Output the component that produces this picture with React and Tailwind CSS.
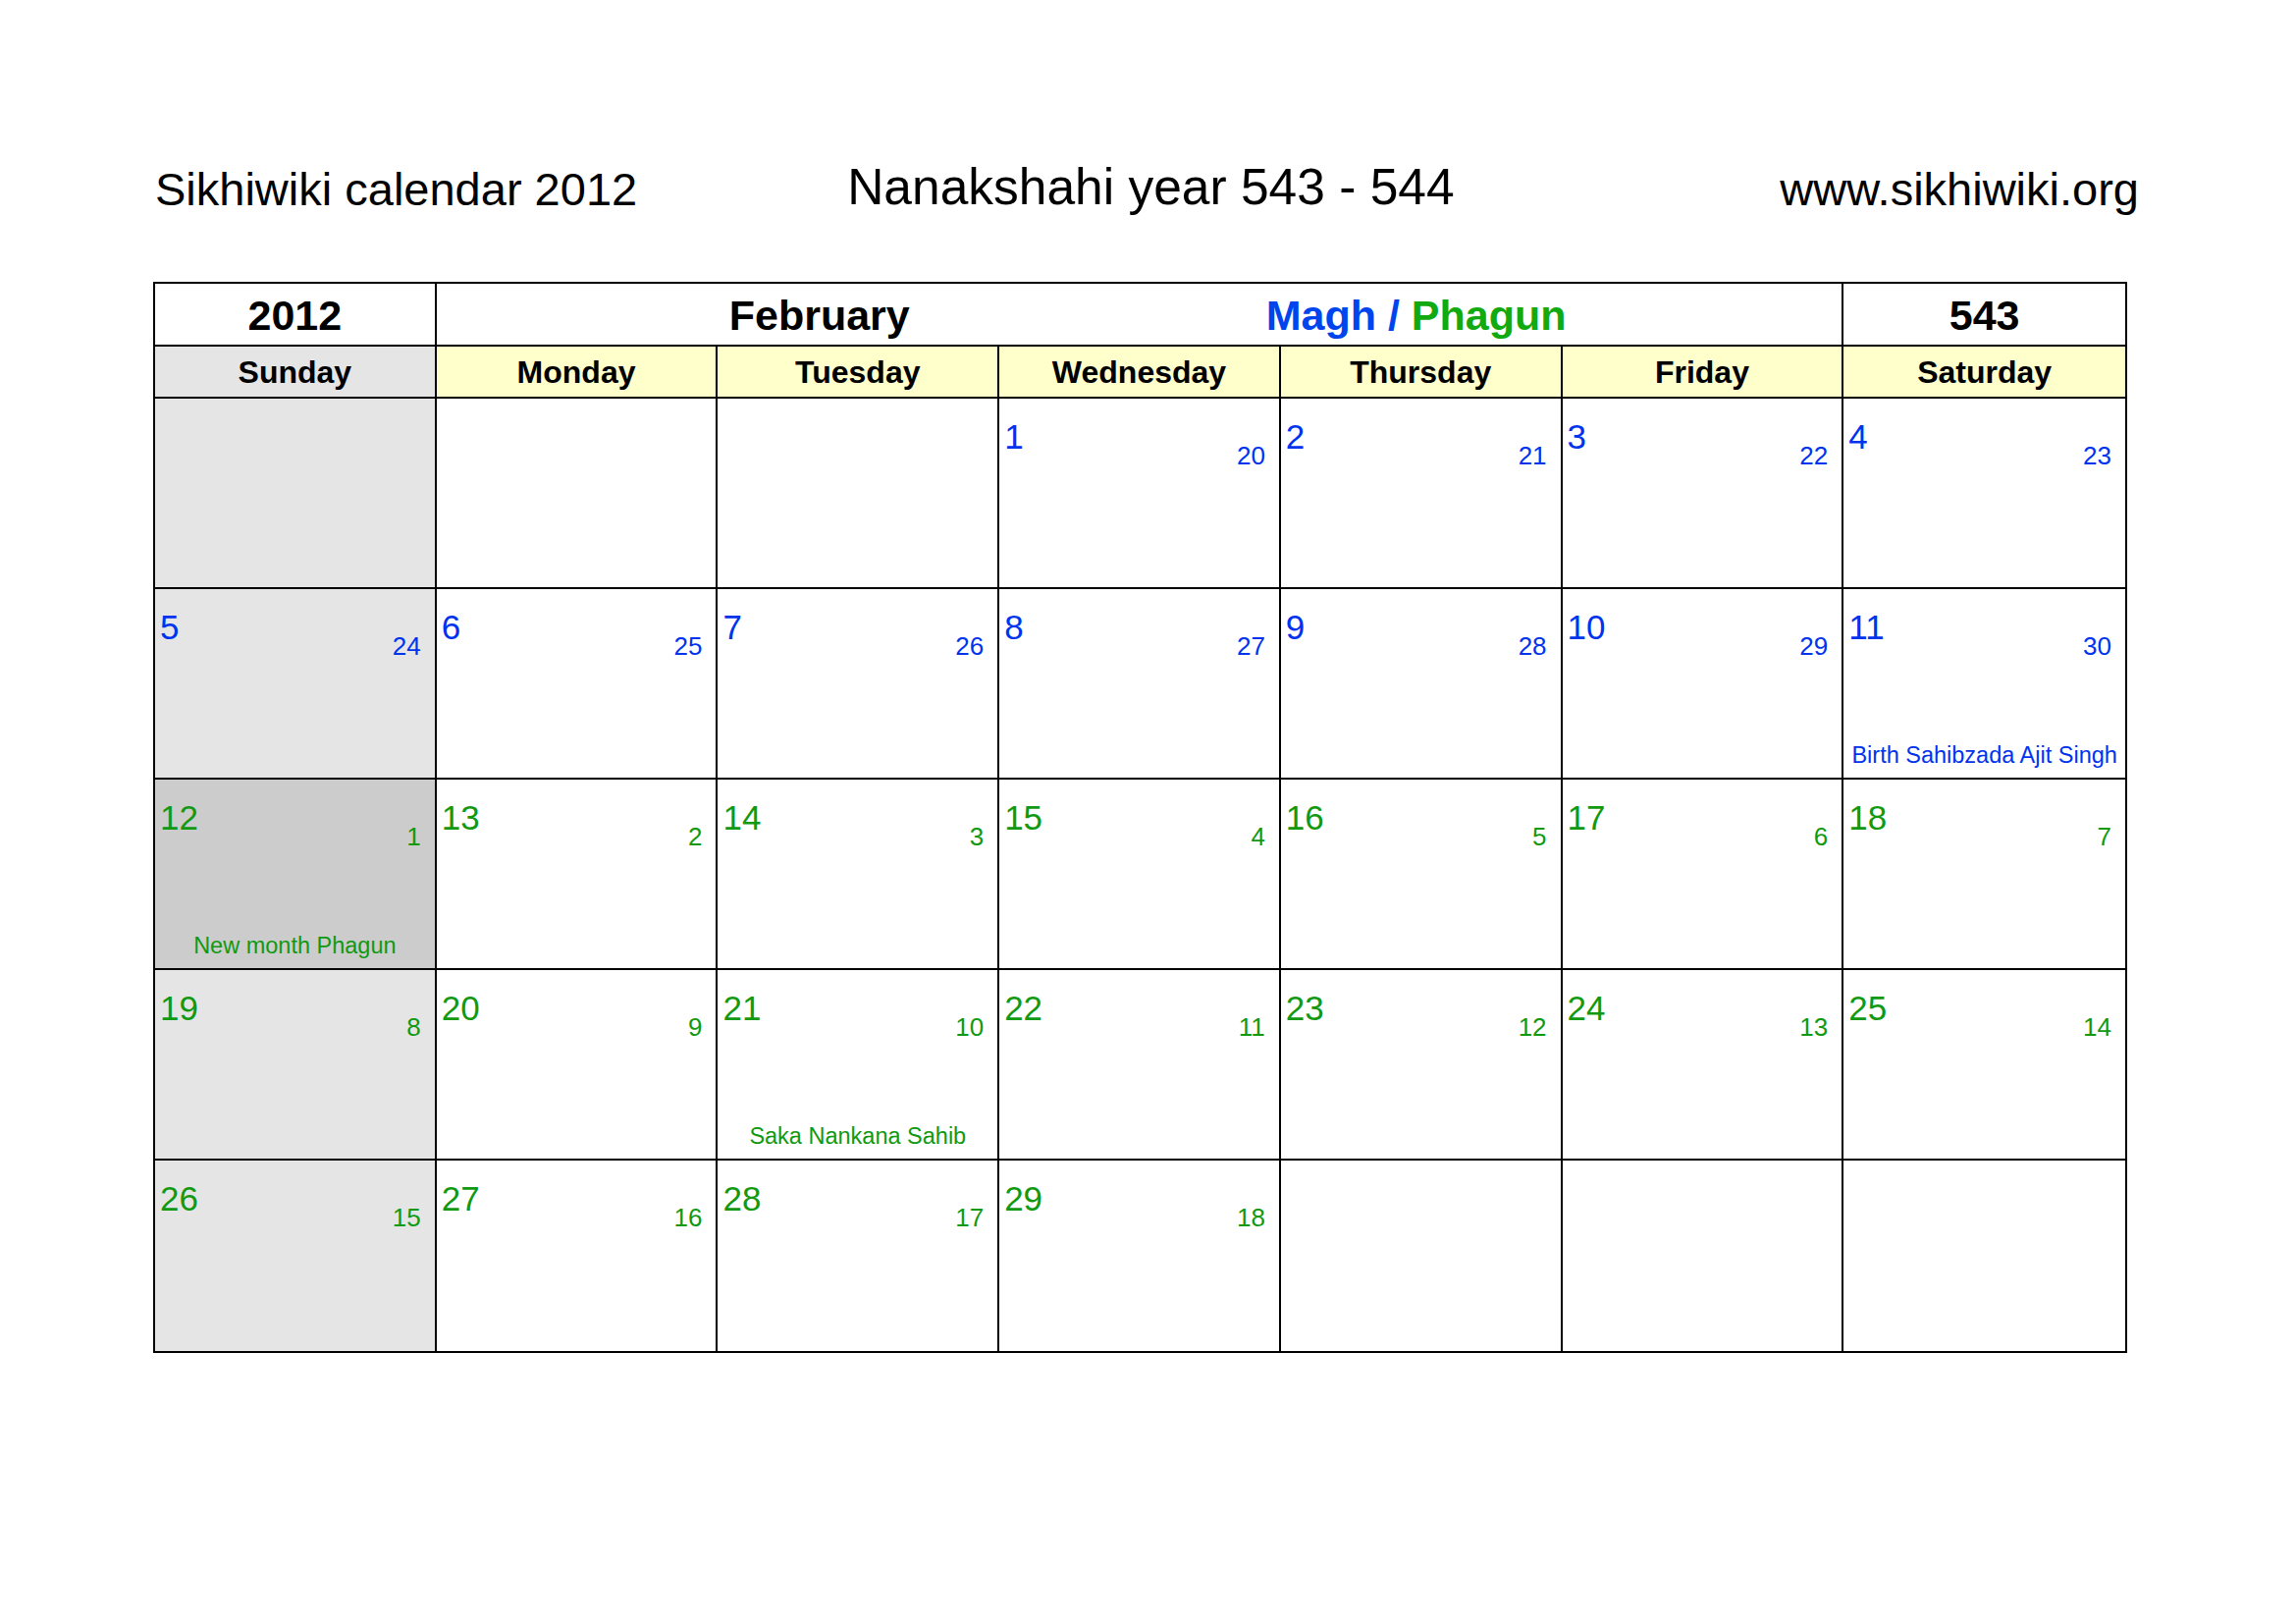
const B = "text-[#0033ee]";
const G = "text-[#119911]";
const rows = [
  [null, null, null, [1, 20, B], [2, 21, B], [3, 22, B], [4, 23, B]],
  [[5, 24, B], [6, 25, B], [7, 26, B], [8, 27, B], [9, 28, B], [10, 29, B], [11, 30, B, "Birth Sahibzada Ajit Singh"]],
  [[12, 1, G, "New month Phagun"], [13, 2, G], [14, 3, G], [15, 4, G], [16, 5, G], [17, 6, G], [18, 7, G]],
  [[19, 8, G], [20, 9, G], [21, 10, G, "Saka Nankana Sahib"], [22, 11, G], [23, 12, G], [24, 13, G], [25, 14, G]],
  [[26, 15, G], [27, 16, G], [28, 17, G], [29, 18, G], null, null, null],
];
const days = ["Sunday", "Monday", "Tuesday", "Wednesday", "Thursday", "Friday", "Saturday"];

export default function App() {
  return (
    <div className="w-[2339px] h-[1653px] bg-white text-black" style={{ fontFamily: '"Liberation Sans", Arial, sans-serif' }}>
      <div className="flex items-end pt-[163px] pl-[158px] pr-[160px] h-[216px]">
        <div className="text-[47px] leading-none">Sikhiwiki calendar 2012</div>
        <div className="text-[51.5px] leading-none ml-[214px]">Nanakshahi year 543 - 544</div>
        <div className="text-[47px] leading-none ml-auto">www.sikhiwiki.org</div>
      </div>
      <div className="ml-[156px] mt-[71px] w-[2011px] border-2 border-black">
        <div className="grid grid-cols-7 h-[64px] border-b-2 border-black">
          <div className="flex items-center justify-center text-[43px] font-bold border-r-2 border-black">2012</div>
          <div className="col-span-5 flex items-center text-[43px] font-bold border-r-2 border-black">
            <span className="pl-[298px]">February</span>
            <span className="pl-[363px] text-[#0044ee]">Magh / <span className="text-[#11aa11]">Phagun</span></span>
          </div>
          <div className="flex items-center justify-center text-[43px] font-bold">543</div>
        </div>
        <div className="grid grid-cols-7 h-[53px] border-b-2 border-black">
          {days.map((d, i) => (
            <div key={d} className={`flex items-center justify-center text-[32px] font-bold ${i === 0 ? "bg-[#e5e5e5]" : "bg-[#ffffcc]"} ${i < 6 ? "border-r-2 border-black" : ""}`}>{d}</div>
          ))}
        </div>
        {rows.map((r, ri) => (
          <div key={ri} className={`grid grid-cols-7 h-[194px] ${ri < 4 ? "border-b-2 border-black" : ""}`}>
            {r.map((c, ci) => (
              <div key={ci} className={`relative flex flex-col ${ci === 0 ? (c && c[0] === 12 ? "bg-[#cccccc]" : "bg-[#e5e5e5]") : ""} ${ci < 6 ? "border-r-2 border-black" : ""}`}>
                {c && (
                  <>
                    <div className="flex justify-between pl-[5px] pr-[14px] pt-[21px]">
                      <span className={`text-[35px] leading-none ${c[2]}`}>{c[0]}</span>
                      <span className={`text-[26px] leading-none mt-[24px] ${c[2]}`}>{c[1]}</span>
                    </div>
                    {c[3] && (
                      <div className={`mt-auto pb-[5px] text-center text-[23.5px] ${c[2]}`}>{c[3]}</div>
                    )}
                  </>
                )}
              </div>
            ))}
          </div>
        ))}
      </div>
    </div>
  );
}
